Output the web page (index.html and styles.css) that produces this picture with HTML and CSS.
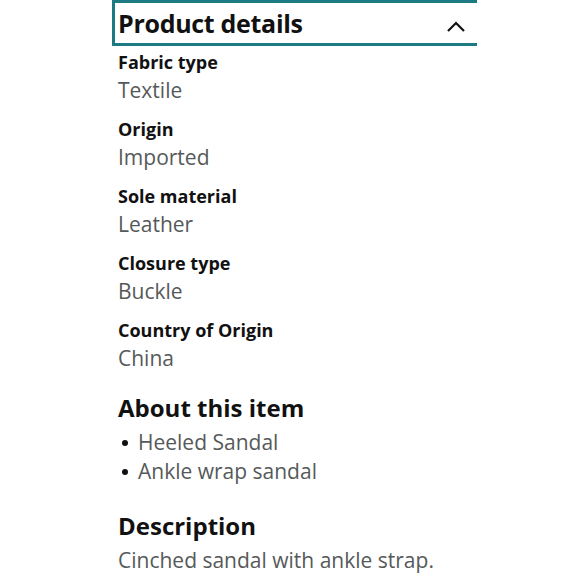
FILE: index.html
```html
<!DOCTYPE html>
<html>
<head>
<meta charset="utf-8">
<link rel="stylesheet" href="styles.css">
</head>
<body>
<div class="page">
  <div class="header">
    <h2 class="header-title">Product details</h2>
    <svg class="chev" width="20" height="12" viewBox="0 0 20 12"><path d="M2 10 L10 2 L18 10" fill="none" stroke="#111" stroke-width="2.2"/></svg>
  </div>
  <div class="content">
    <dl class="details">
      <div class="row"><dt>Fabric type</dt><dd>Textile</dd></div>
      <div class="row"><dt>Origin</dt><dd>Imported</dd></div>
      <div class="row"><dt>Sole material</dt><dd>Leather</dd></div>
      <div class="row"><dt>Closure type</dt><dd>Buckle</dd></div>
      <div class="row"><dt>Country of Origin</dt><dd>China</dd></div>
    </dl>
    <h3 class="section about">About this item</h3>
    <ul class="bullets">
      <li>Heeled Sandal</li>
      <li>Ankle wrap sandal</li>
    </ul>
    <h3 class="section desc">Description</h3>
    <p class="text">Cinched sandal with ankle strap.</p>
  </div>
</div>
</body>
</html>
```
FILE: styles.css
```css
html, body {
  margin: 0;
  padding: 0;
  background: #fff;
}
body {
  font-family: "Open Sans", "Noto Sans", sans-serif;
  color: #111;
  width: 580px;
  height: 580px;
  overflow: hidden;
}
.header {
  margin-left: 112px;
  width: 359px;
  height: 40px;
  border: 3px solid #1b7a82;
  border-right: none;
  display: flex;
  align-items: center;
  justify-content: space-between;
  padding-right: 3px;
}
.header-title {
  margin: 0 0 0 3px;
  font-size: 25px;
  font-weight: 700;
  line-height: 40px;
  letter-spacing: -0.3px;
}
.chev {
  margin-right: 8px;
  margin-top: 8px;
}
.content {
  padding-left: 118px;
}
.details {
  margin: 3px 0 0 0;
}
.row {
  display: flex;
  flex-direction: column;
  margin-bottom: 11px;
}
dt {
  font-size: 18px;
  font-weight: 700;
  line-height: 26px;
  color: #111;
}
dd {
  margin: 0;
  font-size: 21px;
  line-height: 30px;
  color: #565959;
}
.section {
  margin: 0;
  font-size: 24px;
  font-weight: 700;
  line-height: 32px;
}
.about {
  margin-top: 19px;
}
.bullets {
  list-style: none;
  margin: 4px 0 0 0;
  padding: 0;
}
.bullets li {
  font-size: 21px;
  line-height: 29px;
  color: #565959;
  display: flex;
  align-items: center;
}
.bullets li::before {
  content: "";
  width: 6px;
  height: 6px;
  border-radius: 50%;
  background: #111;
  margin: 0 10px 0 4px;
}
.desc {
  margin-top: 24px;
}
.text {
  margin: 2px 0 0 0;
  font-size: 21px;
  line-height: 32px;
  color: #565959;
}
```
